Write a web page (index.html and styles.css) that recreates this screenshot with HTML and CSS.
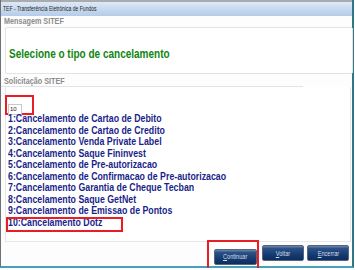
FILE: index.html
```html
<!DOCTYPE html>
<html lang="pt-BR">

<head>
    <meta charset="UTF-8">
    <title>TEF - Transferência Eletrônica de Fundos</title>
    <link rel="stylesheet" href="styles.css">
</head>

<body>
    <div class="window">
        <div class="titlebar"><span class="squeeze title-text">TEF - Transferência Eletrônica de Fundos</span></div>

        <div class="content">
            <div class="group-label"><span class="squeeze">Mensagem SITEF</span></div>
            <div class="message-box">
                <span class="squeeze message-text">Selecione o tipo de cancelamento</span>
            </div>

            <div class="group-label second"><span class="squeeze">Solicitação SITEF</span></div>
            <div class="separator"></div>

            <div class="list-box">
                <div class="mark input-mark">
                    <input class="answer" type="text" value="10">
                </div>
                <ul class="options">
                    <li><span class="squeeze">1:Cancelamento de Cartao de Debito</span></li>
                    <li><span class="squeeze">2:Cancelamento de Cartao de Credito</span></li>
                    <li><span class="squeeze">3:Cancelamento Venda Private Label</span></li>
                    <li><span class="squeeze">4:Cancelamento Saque Fininvest</span></li>
                    <li><span class="squeeze">5:Cancelamento de Pre-autorizacao</span></li>
                    <li><span class="squeeze">6:Cancelamento de Confirmacao de Pre-autorizacao</span></li>
                    <li><span class="squeeze">7:Cancelamento Garantia de Cheque Tecban</span></li>
                    <li><span class="squeeze">8:Cancelamento Saque GetNet</span></li>
                    <li><span class="squeeze">9:Cancelamento de Emissao de Pontos</span></li>
                    <li class="marked"><span class="squeeze">10:Cancelamento Dotz</span></li>
                </ul>
            </div>
        </div>

        <div class="buttons">
            <div class="mark button-mark">
                <button class="btn"><span class="squeeze"><u>C</u>ontinuar</span></button>
            </div>
            <button class="btn"><span class="squeeze"><u>V</u>oltar</span></button>
            <button class="btn last"><span class="squeeze"><u>E</u>ncerrar</span></button>
        </div>
    </div>
</body>

</html>
```

FILE: styles.css
```css
body {
    margin: 0;
    background: #ffffff;
    font-family: "Liberation Sans", Arial, sans-serif;
}

.window {
    width: 351px;
    height: 266px;
    border-left: 1px solid #6d7278;
    border-right: 2px solid #2f7688;
    border-bottom: 2px solid #47a0b6;
    background: #fdfdfd;
    display: flex;
    flex-direction: column;
}

/* texto da captura e mais estreito que a fonte */
.squeeze {
    display: inline-block;
    transform-origin: left center;
    white-space: nowrap;
}

.titlebar {
    height: 14px;
    border-top: 2px solid #a9abaf;
    background: linear-gradient(#dde9f6, #b4cbe8);
    padding-left: 2px;
    font-size: 7px;
    line-height: 13px;
    color: #1e1e1e;
}

.title-text {
    transform: scaleX(0.72);
}

.content {
    flex: 1;
}

.group-label {
    height: 10px;
    padding-left: 3px;
    font-size: 8.5px;
    font-weight: bold;
    line-height: 10px;
    color: #8c8c8c;
}

.group-label .squeeze {
    transform: scaleX(0.85);
}

.group-label.second {
    height: 9px;
    padding-top: 3px;
    line-height: 9px;
}

.message-box {
    height: 45px;
    margin: 1px 0 0 4px;
    width: 343px;
    border: 1px solid #e2e4e4;
    border-radius: 2px;
    background: #ffffff;
    display: flex;
    align-items: center;
    padding-left: 3px;
}

.message-text {
    font-size: 12.5px;
    font-weight: bold;
    color: #128512;
    transform: scaleX(0.8);
    margin-top: 6px;
}

.separator {
    width: 302px;
    height: 1px;
    background: #dde7eb;
}

.list-box {
    height: 146px;
    width: 344px;
    margin-left: 4px;
    padding-top: 8px;
    border: 1px solid #e6e8e8;
    border-top: none;
    background: #ffffff;
}

.mark {
    border: 2px solid #ec1c24;
}

.input-mark {
    width: 24px;
    height: 16px;
    margin-left: -1px;
    padding: 0 0 0 1px;
}

.answer {
    width: 11px;
    height: 9px;
    padding: 0 0 0 1px;
    margin: 0;
    border: 1px solid #c9c9c9;
    font-family: inherit;
    font-size: 6px;
    color: #222222;
    background: #ffffff;
}

.options {
    list-style: none;
    margin: -2px 0 0;
    padding: 0 0 0 2px;
}

.options li {
    height: 11.5px;
    font-size: 10px;
    font-weight: bold;
    line-height: 11.5px;
    color: #1a1f8a;
}

.options li .squeeze {
    transform: scaleX(0.88);
}

.options li.marked {
    position: relative;
}

/* marca vermelha por cima da opcao escolhida */
.options li.marked::after {
    content: "";
    position: absolute;
    left: -2px;
    top: 0;
    width: 117px;
    height: 15px;
    box-sizing: border-box;
    border: 2px solid #ec1c24;
}

.buttons {
    height: 24px;
    display: flex;
    align-items: flex-start;
    justify-content: flex-end;
    gap: 3px;
    padding-right: 3px;
}

.button-mark {
    padding: 3px 0 5px 5px;
    margin-top: -2px;
}

.btn {
    width: 42px;
    height: 16px;
    margin: 3px 0 0;
    padding: 0;
    border: 1px solid #55657e;
    border-radius: 2px;
    background: linear-gradient(#6d86ab 0, #2c5186 18%, #163c72 60%, #0d2d5e 100%);
    color: #d6deea;
    font-family: inherit;
    font-size: 7px;
    text-align: center;
}

.button-mark .btn {
    margin: 0;
    width: 43px;
}

.btn .squeeze {
    transform: scaleX(0.8);
    transform-origin: center;
}
```
